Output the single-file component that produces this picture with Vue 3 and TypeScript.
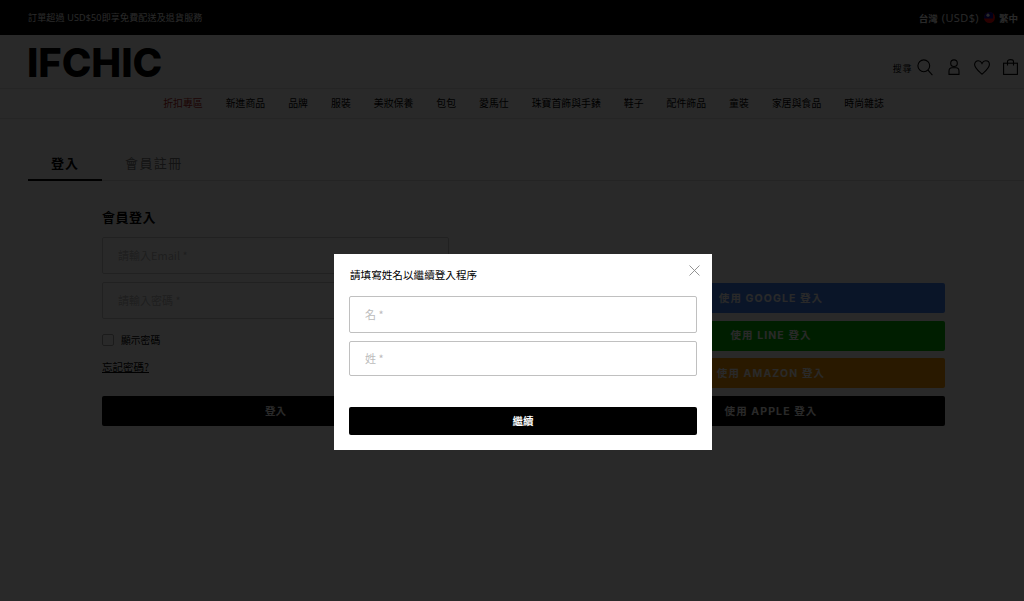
<script setup lang="ts">
const navItems: string[] = ['折扣專區', '新進商品', '品牌', '服裝', '美妝保養', '包包', '愛馬仕', '珠寶首飾與手錶', '鞋子', '配件飾品', '童裝', '家居與食品', '時尚雜誌']
const socials: { label: string; cls: string }[] = [
  { label: '使用 GOOGLE 登入', cls: 'google' },
  { label: '使用 LINE 登入', cls: 'line' },
  { label: '使用 AMAZON 登入', cls: 'amazon' },
  { label: '使用 APPLE 登入', cls: 'apple' },
]
</script>

<template>
  <div class="page">
    <div class="topbar">
      <span class="promo">訂單超過 USD$50即享免費配送及退貨服務</span>
      <div class="locale">
        <span>台灣</span>
        <span class="cur">(USD$)</span>
        <svg class="flag" width="11" height="11" viewBox="0 0 11 11">
          <defs><clipPath id="fc"><circle cx="5.5" cy="5.5" r="5.5" /></clipPath></defs>
          <g clip-path="url(#fc)">
            <rect width="11" height="11" fill="#fe0000" />
            <rect width="9" height="6.5" fill="#000095" />
            <circle cx="4" cy="3.200" r="1.600" fill="#fff" />
          </g>
        </svg>
        <span>繁中</span>
      </div>
    </div>
    <header class="header">
      <div class="logo">IFCHIC</div>
      <div class="tools">
        <span class="search-label">搜尋</span>
        <svg class="ic-search" width="16" height="17" viewBox="0 0 16 17" fill="none" stroke="#000" stroke-width="1.1">
          <circle cx="6.8" cy="6.8" r="5.9" />
          <path d="M11 11.2l4.4 5" />
        </svg>
        <svg class="ic-user" width="12" height="16" viewBox="0 0 12 16" fill="none" stroke="#000" stroke-width="1.1">
          <circle cx="6" cy="4.2" r="3.3" />
          <path d="M1 15.4v-3.2c0-2 1.4-3.4 3-3.4h4c1.6 0 3 1.4 3 3.4v3.2z" />
        </svg>
        <svg class="ic-heart" width="16" height="15" viewBox="0 0 16 15" fill="none" stroke="#000" stroke-width="1.1">
          <path d="M8 14.2C5 11.4.6 8.4.6 4.6.6 2.4 2.2.8 4.2.8c1.6 0 3 .9 3.8 2.6C8.8 1.7 10.200.8 11.800.8c2 0 3.600 1.600 3.600 3.800 0 3.800-4.400 6.800-7.400 9.600z" />
        </svg>
        <svg class="ic-bag" width="15" height="16" viewBox="0 0 15 16" fill="none" stroke="#000" stroke-width="1.1">
          <rect x=".6" y="4.200" width="13.800" height="11.200" />
          <path d="M4.500 6.500V2.500C4.500 1.300 5.500.6 7.500.6s3 .7 3 1.900v4" />
        </svg>
      </div>
    </header>
    <nav class="nav">
      <a v-for="(item, i) in navItems" :key="item" :class="{ sale: i === 0 }">{{ item }}</a>
    </nav>
    <main class="main">
      <div class="tabs">
        <div class="tab active">登入</div>
        <div class="tab">會員註冊</div>
      </div>
      <div class="columns">
        <section class="login">
          <h2>會員登入</h2>
          <input class="field" placeholder="請輸入Email *" />
          <input class="field" placeholder="請輸入密碼 *" />
          <label class="check"><span class="box"></span>顯示密碼</label>
          <a class="forgot">忘記密碼?</a>
          <button class="primary">登入</button>
        </section>
        <section class="social">
          <button v-for="s in socials" :key="s.cls" :class="['soc', s.cls]">{{ s.label }}</button>
        </section>
      </div>
    </main>
    <div class="overlay"></div>
    <div class="modal">
      <svg class="close" width="11" height="11" viewBox="0 0 11 11" stroke="#888" stroke-width=".9">
        <path d="M.5.5l10 10M10.500.5l-10 10" />
      </svg>
      <h3>請填寫姓名以繼續登入程序</h3>
      <input class="m-input" placeholder="名 *" />
      <input class="m-input second" placeholder="姓 *" />
      <button class="m-btn">繼續</button>
    </div>
  </div>
</template>

<style>
html, body { margin: 0; overflow: hidden; background: #fff; }
</style>

<style scoped>
.page {
  position: relative;
  width: 1024px;
  height: 601px;
  overflow: hidden;
  background: #fff;
  font-family: "Noto Sans CJK TC", "Liberation Sans", sans-serif;
  color: #000;
}
.topbar {
  height: 35px;
  background: #000;
  color: #fff;
  font-size: 9.500px;
  display: flex;
  align-items: center;
  justify-content: space-between;
  padding: 0 6px 0 28px;
  font-family: "Open Sans", "Noto Sans CJK TC", sans-serif;
  font-weight: 600;
}
.promo { font-size: 9px; font-weight: 400; letter-spacing: .17px; }
.locale { display: flex; align-items: center; gap: 4px; }
.cur { font-weight: 400; font-size: 11px; letter-spacing: .4px; }
.flag { margin: 0 0 0 1px; }
.header {
  height: 53px;
  border-bottom: 1px solid #e6e6e6;
  display: flex;
  align-items: center;
  justify-content: space-between;
  padding: 0 6px 0 27px;
}
.logo {
  font-family: "Inter", sans-serif;
  font-size: 40px;
  font-weight: 800;
  letter-spacing: -.1px;
  line-height: 1;
  margin-top: 3px;
}
.tools { display: flex; align-items: center; padding-top: 11px; }
.search-label { font-size: 9px; letter-spacing: .6px; margin: 2px 5px 0 0; }
.ic-user { margin-left: 15px; }
.ic-heart { margin-left: 14px; }
.ic-bag { margin-left: 13px; }
.nav {
  width: 1047px;
  height: 30px;
  box-sizing: border-box;
  border-bottom: 1px solid #e6e6e6;
  padding-bottom: 1px;
  display: flex;
  justify-content: center;
  align-items: center;
  gap: 23px;
  font-size: 9.900px;
}
.sale { color: #b01c1c; }
.main { width: 1047px; box-sizing: border-box; padding: 30px 0 0 28px; }
.tabs {
  display: flex;
  height: 31px;
  width: 996px;
  border-bottom: 1px solid #ddd;
  box-sizing: content-box;
}
.tab {
  width: 74px;
  margin-right: 23px;
  text-align: center;
  font-size: 13px;
  letter-spacing: 1px;
  color: #777;
  line-height: 27px;
}
.tab + .tab { width: auto; margin: 0; padding-left: 0; letter-spacing: 1.4px; }
.tab.active { color: #000; font-weight: 700; border-bottom: 2px solid #000; height: 30px; }
.columns {
  display: grid;
  grid-template-columns: 347px 348px;
  gap: 148px;
  margin-left: 74px;
}
.login { display: flex; flex-direction: column; align-items: flex-start; }
h2 {
  margin: 26px 0 0;
  font-size: 13px;
  line-height: 19px;
  font-weight: 700;
  letter-spacing: .5px;
}
.field {
  width: 100%;
  height: 37px;
  box-sizing: border-box;
  margin: 0 0 8px;
  padding: 0 15px 2px;
  border: 1px solid #ccc;
  border-radius: 2px;
  font: 11px "Noto Sans CJK TC", sans-serif;
  background: #fff;
  outline: none;
}
h2 + .field { margin-top: 11px; }
.field::placeholder { color: #bbb; opacity: 1; }
.check {
  display: flex;
  align-items: center;
  gap: 7px;
  font-size: 9.800px;
  margin-top: 6px;
  height: 14px;
}
.box {
  width: 10px;
  height: 10px;
  margin-left: 0;
  border: 1px solid #aaa;
  border-radius: 2px;
}
.forgot {
  margin-top: 12px;
  font-size: 10.500px;
  line-height: 15px;
  text-decoration: underline;
}
.primary, .m-btn {
  border: 0;
  background: #000;
  color: #fff;
  border-radius: 2px;
  padding: 0 0 2px;
  font: 700 10.500px "Noto Sans CJK TC", sans-serif;
  width: 100%;
}
.primary { height: 30px; margin-top: 22px; }
.social { display: flex; flex-direction: column; gap: 7.700px; padding-top: 102px; }
.soc {
  height: 30px;
  padding: 0 0 2px;
  border: 0;
  border-radius: 2px;
  color: #fff;
  font: 700 10.500px "Inter", "Noto Sans CJK TC", sans-serif;
  letter-spacing: 1.100px;
}
.google { background: #4285f4; }
.line { background: #00b900; }
.amazon { background: #ff9900; }
.apple { background: #000; }
.overlay { position: absolute; inset: 0; background: rgba(0, 0, 0, .84); }
.modal {
  position: absolute;
  left: 334px;
  top: 254px;
  width: 378px;
  height: 196px;
  box-sizing: border-box;
  padding: 15px;
  background: #fff;
  display: flex;
  flex-direction: column;
}
.modal h3 { margin: 0 0 0 1px; font-size: 10.600px; font-weight: 400; line-height: 12px; }
.close { position: absolute; right: 12px; top: 11px; }
.m-input {
  width: 100%;
  box-sizing: border-box;
  margin-top: 15px;
  height: 37px;
  padding: 0 15px;
  border: 1px solid #c0c0c0;
  border-radius: 2px;
  font: 11px "Noto Sans CJK TC", sans-serif;
  outline: none;
}
.m-input.second { margin-top: 8px; height: 36px; }
.m-input::placeholder { color: #bbb; opacity: 1; }
.m-btn { height: 28px; margin-top: 31px; }
</style>
